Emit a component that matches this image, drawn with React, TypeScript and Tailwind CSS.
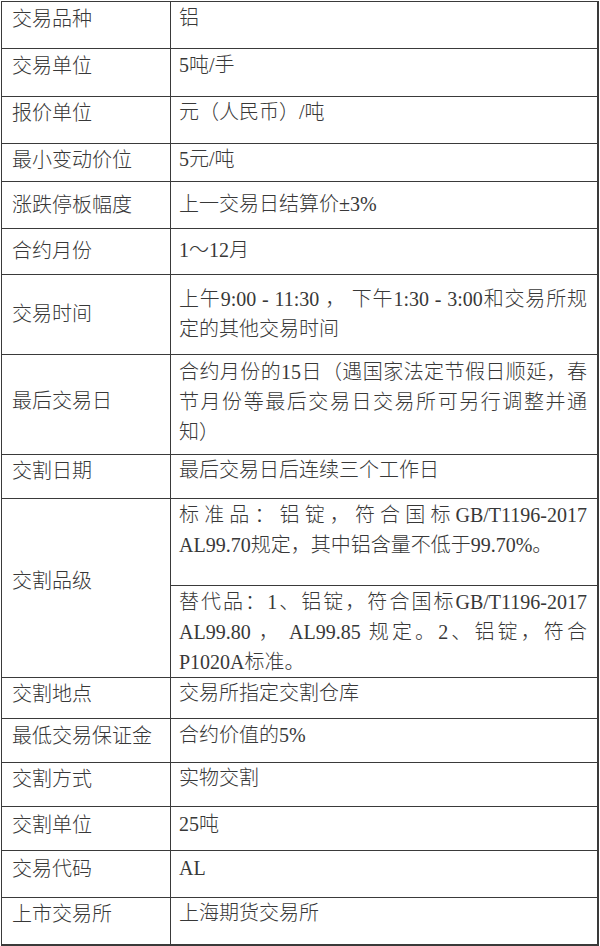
import React from "react";

const B = "border-[#3a3a3a]";

type Row = {
  label: string;
  h: string;
  pt: string;
  lpt?: string;
  content: React.ReactNode;
};

const rows: Row[] = [
  { label: "交易品种", h: "h-[47px]", pt: "pt-[1px]", content: "铝" },
  { label: "交易单位", h: "h-[48px]", pt: "pt-[1px]", content: "5吨/手" },
  { label: "报价单位", h: "h-[47px]", pt: "pt-0", content: "元（人民币）/吨" },
  { label: "最小变动价位", h: "h-[38px]", pt: "pt-0", content: "5元/吨" },
  { label: "涨跌停板幅度", h: "h-[47px]", pt: "pt-[7px]", content: "上一交易日结算价±3%" },
  { label: "合约月份", h: "h-[46px]", pt: "pt-[6px]", content: "1～12月" },
  {
    label: "交易时间",
    h: "h-[80px]",
    pt: "pt-[9px]",
    lpt: "pt-[23px]",
    content: "上午9:00 - 11:30 ， 下午1:30 - 3:00和交易所规定的其他交易时间",
  },
  {
    label: "最后交易日",
    h: "h-[100px]",
    pt: "pt-[2px]",
    lpt: "pt-[30px]",
    content: "合约月份的15日（遇国家法定节假日顺延，春节月份等最后交易日交易所可另行调整并通知）",
  },
  { label: "交割日期", h: "h-[44px]", pt: "pt-0", content: "最后交易日后连续三个工作日" },
];

const rows2: Row[] = [
  { label: "交割地点", h: "h-[41px]", pt: "pt-0", content: "交易所指定交割仓库" },
  { label: "最低交易保证金", h: "h-[44px]", pt: "pt-[1px]", content: "合约价值的5%" },
  { label: "交割方式", h: "h-[44px]", pt: "pt-0", content: "实物交割" },
  { label: "交割单位", h: "h-[44px]", pt: "pt-[2px]", content: "25吨" },
  { label: "交易代码", h: "h-[47px]", pt: "pt-[2px]", content: "AL" },
  { label: "上市交易所", h: "h-[46px]", pt: "pt-0", content: "上海期货交易所" },
];

const labelCls = `w-[169px] shrink-0 border-r ${B} pl-[10px] font-['Noto_Sans_CJK_SC',sans-serif] font-light`;
const contentCls = `flex-1 min-w-0 pl-[8px] pr-[10px] text-justify font-['Liberation_Serif','Noto_Sans_CJK_SC',serif] font-light`;

function TableRow({ r, last }: { r: Row; last?: boolean }) {
  return (
    <div className={`flex ${r.h} ${last ? "" : `border-b ${B}`}`}>
      <div className={`${labelCls} ${r.lpt ?? r.pt}`}>{r.label}</div>
      <div className={`${contentCls} ${r.pt}`}>{r.content}</div>
    </div>
  );
}

export default function App() {
  return (
    <div className="w-[600px] h-[946px] bg-white">
      <div
        className={`ml-[1px] mt-[1px] w-[598px] border-t border-l border-r-2 border-b-2 ${B} text-[20px] leading-[30px] text-[#383838]`}
      >
        {rows.map((r) => (
          <TableRow key={r.label} r={r} />
        ))}
        <div className={`flex h-[179px] border-b ${B}`}>
          <div className={`${labelCls} pt-[66px]`}>交割品级</div>
          <div className="flex-1 min-w-0 flex flex-col">
            <div className={`${contentCls} h-[75px] pt-[1px] border-b ${B}`}>
              标准品：铝锭，符合国标GB/T1196-2017 AL99.70规定，其中铝含量不低于99.70%。
            </div>
            <div className={`${contentCls} flex-1 pt-[1px]`}>
              替代品：1、铝锭，符合国标GB/T1196-2017 AL99.80 ， AL99.85 规定。2、铝锭，符合P1020A标准。
            </div>
          </div>
        </div>
        {rows2.map((r, i) => (
          <TableRow key={r.label} r={r} last={i === rows2.length - 1} />
        ))}
      </div>
    </div>
  );
}
